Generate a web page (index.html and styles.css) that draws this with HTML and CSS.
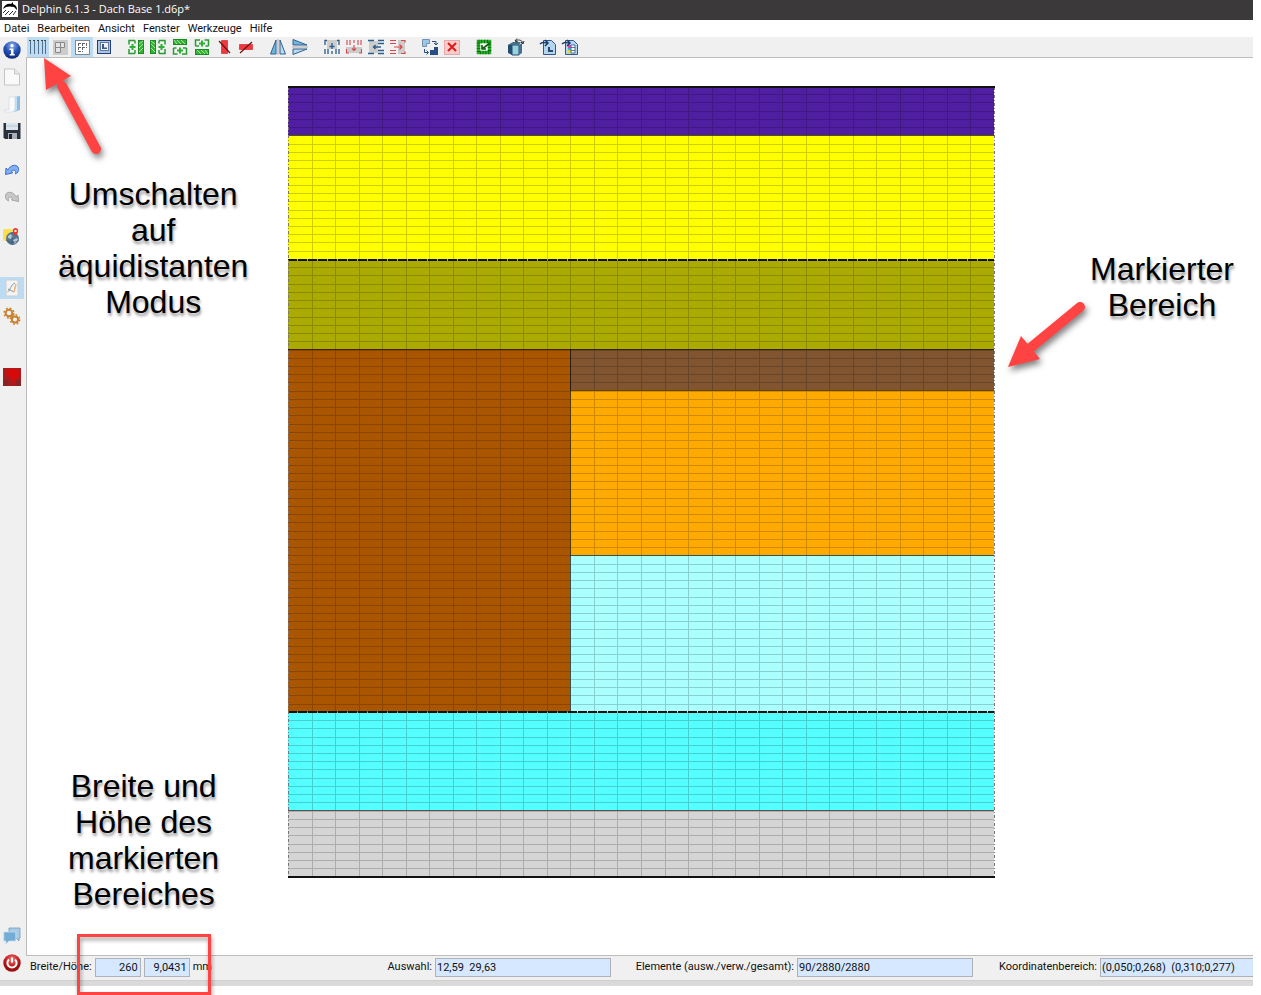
FILE: index.html
```html
<!DOCTYPE html>
<html lang="de">
<head>
<meta charset="utf-8">
<title>Delphin 6.1.3 - Dach Base 1.d6p*</title>
<link rel="stylesheet" href="styles.css">
</head>
<body>
<div class="app">
  <header class="titlebar">
    <svg class="logo" viewBox="0 0 16 16"><rect width="16" height="16" fill="#fff"/><path d="M1 8C2 4 6 2 9 3l2-2v2c3 1 4 3 4 6l-3-3C8 5 4 5 1 8z" fill="#000"/><path d="M3 14l4-4M7 14l4-4M11 14l3-4M1 12l3-3" stroke="#333" stroke-width="1"/></svg>
    <span>Delphin 6.1.3 - Dach Base 1.d6p*</span>
  </header>
  <nav class="menubar">
    <button>Datei</button><button>Bearbeiten</button><button>Ansicht</button><button>Fenster</button><button>Werkzeuge</button><button>Hilfe</button>
  </nav>
  <div class="workspace">
    <aside class="sidebar">
      <button aria-label="Info"><svg viewBox="0 0 18 18"><defs><radialGradient id="ib" cx=".5" cy=".25" r=".8"><stop offset="0" stop-color="#8fb4ee"/><stop offset=".5" stop-color="#2450b4"/><stop offset="1" stop-color="#0a2470"/></radialGradient></defs><circle cx="9" cy="9" r="8.7" fill="url(#ib)"/><circle cx="9" cy="4.7" r="1.6" fill="#fff"/><path d="M6.5 7.5h4v5.5h1.200v1.500h-5v-1.500h1.300V9H6.500z" fill="#fff"/></svg></button>
      <button aria-label="Neu"><svg viewBox="0 0 18 18"><path d="M1.500 1h10l5 5v11h-15z" fill="#fafafa" stroke="#c4c4c4"/><path d="M11.500 1v5h5" fill="#e8e8e8" stroke="#c4c4c4"/></svg></button>
      <button aria-label="Öffnen"><svg viewBox="0 0 18 18"><path d="M11 2l6-1v14l-6 2z" fill="#8dbce4"/><path d="M11 2l3-1v14l-3 2z" fill="#c4e0f4"/><path d="M6 2h6v12l-3 3H2l-1-2h5z" fill="#fafbfc" stroke="#ccd3da" stroke-width=".6"/></svg></button>
      <button aria-label="Speichern"><svg viewBox="0 0 18 18"><path d="M.5 1h17v16H2L.5 15.500z" fill="#2a313c"/><path d="M3 1h12v7H3z" fill="#dce5ec"/><path d="M3 4h12" stroke="#b8c6d0"/><path d="M5 11h9v6H5z" fill="#a8aeb5"/><path d="M6 12h3v5H6z" fill="#20252c"/></svg></button>
      <button class="gap-s" aria-label="Rückgängig"><svg viewBox="0 0 18 18"><path d="M5 9C7 4 13 3 15 6c1.500 3 0 6-2.500 7 1-3-1-5-4-3l1 2-7 1.500L3 7z" fill="#7eb0f4" stroke="#3563c8" stroke-width=".9"/></svg></button>
      <button aria-label="Wiederholen"><svg viewBox="0 0 18 18"><path d="M13 9C11 4 5 3 3 6c-1.500 3 0 6 2.500 7-1-3 1-5 4-3l-1 2 7 1.500L15 7z" fill="#c8c8c8" stroke="#a0a0a0" stroke-width=".9"/></svg></button>
      <button class="gap-m" aria-label="Klima"><svg viewBox="0 0 18 18"><rect y="1" width="10" height="12" rx="2" fill="#fbe04d"/><circle cx="9.500" cy="10.500" r="6.500" fill="#587590"/><path d="M5 8l3-2 2 2-2 3-3-1zM10 12l4-2 1 2-3 4z" fill="#b5c8d4"/><path d="M3 12c4 3 9 3 13 0M9 4v13" stroke="#304b68" stroke-width=".5" fill="none"/><path d="M12.500 8C8 3 10 0 12.500 0S17 3 12.500 8z" fill="#ee3424"/><circle cx="12.500" cy="3" r="1.200" fill="#fff"/></svg></button>
      <button class="gap-l" aria-label="Konstruktion" aria-pressed="true"><svg viewBox="0 0 18 18"><rect x="3" y="1" width="12" height="16" fill="#f4f4f4" stroke="#ccc"/><path d="M4.500 13C8 11 7 6 12 4M5 10l6 3" stroke="#8a949c" fill="none"/><path d="M13 5l-2 8" stroke="#e8b67c" stroke-width="1.500"/></svg></button>
      <button aria-label="Einstellungen"><svg viewBox="0 0 18 18" fill="none" stroke="#c98232"><circle cx="6" cy="6" r="3.300" stroke-width="2"/><circle cx="6" cy="6" r="4.900" stroke-width="1.500" stroke-dasharray="1.900 1.950"/><circle cx="12" cy="12.500" r="3.100" stroke-width="2"/><circle cx="12" cy="12.500" r="4.700" stroke-width="1.500" stroke-dasharray="1.800 1.890"/></svg></button>
      <button class="gap-xl" aria-label="Ergebnisse"><svg viewBox="0 0 18 18"><rect width="18" height="18" fill="#a81c1c"/><path d="M5 1h8l4 3-1 5-4 2-1 5-3-6-5-4z" fill="#d60a0a"/><path d="M0 12h6v6H0zM13 12h5v6h-5z" fill="#8b2222"/></svg></button>
      <button class="push" aria-label="Meldungen"><svg viewBox="0 0 18 18"><path d="M6 1h11v10h-1v3l-3-3H6z" fill="#a8cce6" stroke="#7299b8" stroke-width=".8"/><path d="M.8 5h12v9H6l-3 3v-3H.800z" fill="#73acd4" stroke="#c5deef" stroke-width=".8"/></svg></button>
      <button aria-label="Beenden"><svg viewBox="0 0 18 18"><defs><radialGradient id="rb" cy=".3"><stop offset="0" stop-color="#f08484"/><stop offset=".7" stop-color="#cc2020"/><stop offset="1" stop-color="#a01010"/></radialGradient></defs><circle cx="9" cy="9" r="8.700" fill="url(#rb)"/><path d="M6 5.500a4.600 4.600 0 1 0 6 0M9 3.500v5" fill="none" stroke="#fff" stroke-width="2"/></svg></button>
    </aside>
    <main class="content">
      <div class="toolbar">
        <div class="tools">
          <button aria-label="Äquidistant" aria-pressed="true"><svg viewBox="0 0 18 18"><path d="M1.500 3v13M5.500 3v13M9.500 3v13M13.500 3v13M16.500 3v13" stroke="#52708c"/><path d="M0 2.500h2M4 2.500h2M8 2.500h2M12 2.500h2M15 2.500h2" stroke="#444"/></svg></button>
          <button aria-label="Zoom"><svg viewBox="0 0 18 18"><rect x="2" y="2" width="15" height="15" fill="#ccc"/><path d="M4.500 4.500h9v5h-4v5h-5zM9.500 4.500v5h-5" fill="#e4e4e4" stroke="#888"/></svg></button>
          <button aria-label="Raster" aria-pressed="true"><svg viewBox="0 0 18 18"><rect x="2.500" y="2.500" width="14" height="14" fill="#fff" stroke="#888"/><path d="M5 5.500h9M5 9.500h9M5 13.500h5M5.500 5v9M9.500 5v9M13.500 5v5" stroke="#666" stroke-dasharray="3 1"/></svg></button>
          <button aria-label="Ansicht"><svg viewBox="0 0 18 18"><rect x="2.500" y="2.500" width="13" height="13" fill="#a9c6e7" stroke="#243f78"/><rect x="5.500" y="4.500" width="8" height="8" fill="#eef4fb" stroke="#6279a0"/><path d="M7 6v5h5V9.500H9V6z" fill="#40598c"/></svg></button>
        </div>
        <div class="tools">
          <button aria-label="Spalte links einfügen"><svg viewBox="0 0 18 18"><use href="#addcol"/></svg></button>
          <button aria-label="Spalte rechts einfügen"><svg viewBox="0 0 18 18"><use href="#addcol" transform="matrix(-1 0 0 1 18 0)"/></svg></button>
          <button aria-label="Zeile unten einfügen"><svg viewBox="0 0 18 18"><use href="#addcol" transform="matrix(0 -1 1 0 0 18)"/></svg></button>
          <button aria-label="Zeile oben einfügen"><svg viewBox="0 0 18 18"><use href="#addcol" transform="rotate(90 9 9)"/></svg></button>
          <button aria-label="Spalte löschen"><svg viewBox="0 0 18 18"><path d="M6.500 2.500h6v13h-6z" fill="#ee3840" stroke="#e04850"/><path d="M4 3l11 12" stroke="#6c1010" stroke-width="1.200"/></svg></button>
          <button aria-label="Zeile löschen"><svg viewBox="0 0 18 18"><path d="M2.500 6.500h13v5h-13z" fill="#ee3840" stroke="#e04850"/><path d="M3 15L15 4" stroke="#6c1010" stroke-width="1.200"/></svg></button>
        </div>
        <div class="tools">
          <button aria-label="Horizontal spiegeln"><svg viewBox="0 0 18 18"><use href="#mirror"/></svg></button>
          <button aria-label="Vertikal spiegeln"><svg viewBox="0 0 18 18"><use href="#mirror" transform="rotate(90 9 9)"/></svg></button>
        </div>
        <div class="tools">
          <button class="blue" aria-label="Spalten teilen"><svg viewBox="0 0 18 18"><path d="M4 2h10v9H4z" fill="#ccc"/><path d="M2 7V2.500h2M16 7V2.500h-2M9 5v6M6.500 8.500h5M2 11v5M5 11v5M9 13v3M13 11v5M16 11v5" fill="none" stroke="currentColor" stroke-width="1.300"/></svg></button>
          <button class="red" aria-label="Spalten verbinden"><svg viewBox="0 0 18 18"><path d="M1 9h16v6H1z" fill="#ccc"/><path d="M2 2v5M5 2v5M9 2v3M13 2v5M16 2v5M9 7v6M7 10.500l2 2 2-2M1.500 11v4H4M16.500 11v4H14" fill="none" stroke="currentColor" stroke-width="1.100"/></svg></button>
          <button class="blue" aria-label="Zeilen teilen"><svg viewBox="0 0 18 18"><path d="M2 3h9v12H2z" fill="#ccc"/><path d="M1 2.500h6M1 15.500h6M11 2.500h6M11 5.500h6M11 12.500h6M11 15.500h6M14 9H6M8.500 7l-2 2 2 2" fill="none" stroke="currentColor" stroke-width="1.300"/></svg></button>
          <button class="red" aria-label="Zeilen verbinden"><svg viewBox="0 0 18 18"><path d="M9 2h7v14H9z" fill="#ccc"/><path d="M1 2.500h6M1 5.500h6M1 12.500h6M1 15.500h6M5 9h8M10.500 6.500L13 9l-2.500 2.500M12 2.500h4v2M12 15.500h4v-2" fill="none" stroke="currentColor" stroke-width="1.200"/></svg></button>
        </div>
        <div class="tools">
          <button aria-label="Zuweisen"><svg viewBox="0 0 18 18"><path d="M1.500 1.500h7v4h-3v3h-4z" fill="#9ac9e8" stroke="#7591b0"/><path d="M9 12h8v5H9zM13 9h4v3h-4z" fill="#294d80"/><path d="M11 3.500h4V6M13 5l2 2 2-2M3.500 11v3.500H7M5.500 12.500l2 2-2 2" fill="none" stroke="#294d80"/></svg></button>
          <button aria-label="Zuweisung löschen"><svg viewBox="0 0 18 18"><rect x="1.500" y="2.500" width="15" height="14" fill="#fbcaca" stroke="#e6aaaa"/><path d="M5 5l8 8M13 5l-8 8" stroke="#df1818" stroke-width="2"/></svg></button>
        </div>
        <div class="tools"><button aria-label="Bearbeiten"><svg viewBox="0 0 18 18"><rect x="3.500" y="3.500" width="11" height="11" fill="#fff" stroke="#24b024" stroke-width="3.500"/><rect x="3.500" y="3.500" width="11" height="11" fill="none" stroke="#0c6010" stroke-width="3.500" stroke-dasharray=".8 2"/><path d="M7 7v4h4M7 11l8-6" fill="none" stroke="#145c18" stroke-width="1.600"/></svg></button></div>
        <div class="tools"><button aria-label="Drehen"><svg viewBox="0 0 18 18"><path d="M1 7l4-2v12l-4-2z" fill="#254d70"/><path d="M5 7h7v10H5z" fill="#9bd0df" stroke="#254d70"/><path d="M12 7l3-2v10l-3 2zM1 7l5-3h8l-2 3z" fill="#42718b"/><path d="M8 3c3-2 7-1 8 2M14 4l2 2 1-3M10 .5L8 3l3 1" fill="none" stroke="#333"/></svg></button></div>
        <div class="tools">
          <button aria-label="Import"><svg viewBox="0 0 18 18"><path d="M4.500 2.500h8l4 4v10h-12z" fill="#b4d7f0" stroke="#31568c"/><path d="M9 9v5h5v-2h-3V9z" fill="#31466c"/><path d="M1 6c3-3 4-1 7-1M6 2l3 3-3 3" fill="none" stroke="#203a68" stroke-width="1.500"/></svg></button>
          <button aria-label="Tabelle importieren"><svg viewBox="0 0 18 18"><path d="M4.500 2.500h8l4 4v10h-12z" fill="#b4d7f0" stroke="#31568c"/><path d="M10 7h4v8h-4z" fill="#fff"/><path d="M7 7h3v3H7z" fill="#e73fac"/><path d="M7 10h3v2H7z" fill="#35b8d8"/><path d="M7 12h3v3H7z" fill="#e9d71e"/><path d="M10 7h4v8h-4zM10 9.500h4M10 12.500h4" fill="none" stroke="#31568c" stroke-width=".8"/><path d="M1 6c3-3 4-1 7-1M6 2l3 3-3 3" fill="none" stroke="#203a68" stroke-width="1.500"/></svg></button>
        </div>
      </div>
      <div class="canvas">
        <svg class="construction" viewBox="0 0 708 792">
          <g id="layers"></g>
          <path id="grid" class="grid"/>
          <path class="edge" d="M0 49.500h706M0 263.500h706M282.500 304.500h424M282.500 469.500h424M0 724.500h706M282.500 263v362"/>
          <path class="contact" d="M0 174h706M0 626h706"/>
          <path class="side" d="M.5 1v789M706.500 1v789"/>
          <path class="outer" d="M0 1h707M0 791h707"/>
        </svg>
      </div>
      <footer class="statusbar">
        <label for="w">Breite/Höhe:</label>
        <input class="num" id="w" value="260">
        <input class="num" id="h" aria-label="Höhe" value="9,0431">
        <span class="unit">mm</span>
        <label class="first" for="sel">Auswahl:</label>
        <input class="wide" id="sel" value="12,59  29,63">
        <label class="elements" for="el">Elemente (ausw./verw./gesamt):</label>
        <input class="wide" id="el" value="90/2880/2880">
        <label class="coords" for="co">Koordinatenbereich:</label>
        <input class="last" id="co" value="(0,050;0,268)  (0,310;0,277)">
      </footer>
    </main>
  </div>
  <div class="bottom-edge"></div>

  <p class="note note-mode">Umschalten<br>auf<br>äquidistanten<br>Modus</p>
  <p class="note note-size">Breite und<br>Höhe des<br>markierten<br>Bereiches</p>
  <p class="note note-area">Markierter<br>Bereich</p>
  <svg class="arrow arrow-mode" viewBox="0 0 70 110"><path d="M18 28l34 63" stroke-width="10" stroke-linecap="round"/><path d="M0 0l27 18-25 14z"/></svg>
  <svg class="arrow arrow-area" viewBox="0 0 90 75"><path d="M21 47l51-42" stroke-width="10" stroke-linecap="round"/><path d="M0 65l13-31 19 23z"/></svg>
  <div class="frame"></div>
</div>
<svg class="defs">
  <defs>
    <g id="addcol"><rect x="11.500" y="2.500" width="5" height="13" fill="#35b135" stroke="#1b8a22"/><path d="M12 6l4-3M12 10l4-4M12 14l4-4" stroke="#a4e8a0"/><path d="M8 2.500H2v4M2 11v4.500h6M8 2.500v3M8 12v3.500" fill="none" stroke="#2b9a35" stroke-width="1.500"/><path d="M5.500 6v6M2.500 9h6" stroke="#2fae38" stroke-width="2"/></g>
    <g id="mirror"><path d="M7 2v14H1.500z" fill="#6fb7dd" stroke="#315f94"/><path d="M11 2v14h5.500z" fill="#b9dced" stroke="#315f94"/><path d="M9 1v16" stroke="#aaa"/></g>
  </defs>
</svg>
<script src="construction.js"></script>
</body>
</html>
```
FILE: styles.css
```css
* { box-sizing: border-box; }
body { min-height: 100vh; margin: 0; background: #fff; color: #111; font: 11px/16px Roboto, "Noto Sans", sans-serif; }
button { border: 0; padding: 0; background: none; font: inherit; color: inherit; }
svg { display: block; }
.defs { position: absolute; width: 0; height: 0; }
.app { position: relative; display: flex; flex-direction: column; min-height: calc(100vh - 9px); margin-right: 8px; }
.titlebar { display: flex; align-items: center; gap: 4px; height: 20px; padding: 0 2px 3px; background: #3b3939; color: #fff; font-family: "Open Sans", "Noto Sans", sans-serif; }
.logo { width: 16px; height: 16px; }
.menubar { display: flex; gap: 8px; height: 17px; padding: 1px 4px 0; }
.workspace { display: flex; flex: 1; background: #f0f0f0; }
.sidebar { display: flex; flex-direction: column; width: 26px; padding-bottom: 4px; }
.sidebar button { display: grid; place-items: center; width: 24px; height: 27px; }
.sidebar button:first-child { height: 26px; }
.sidebar svg { width: 18px; height: 18px; }
.sidebar [aria-pressed="true"] { height: 22px; margin-bottom: 3px; background: #bcdcf4; }
.sidebar .gap-s { margin-top: 12px; }
.sidebar .gap-m { margin-top: 13px; }
.sidebar .gap-l { margin-top: 27px; }
.sidebar .gap-xl { margin-top: 34px; }
.sidebar .push { margin-top: auto; }
.content { display: flex; flex: 1; flex-direction: column; min-width: 0; }
.toolbar { display: flex; gap: 10px; height: 20px; padding-left: 1px; }
.tools { display: flex; }
.tools button { display: grid; place-items: center; width: 22px; height: 20px; }
.tools svg { width: 18px; height: 18px; }
.tools [aria-pressed="true"] { background: #bcdcf4; }
.blue { color: #2c5b8c; }
.red { color: #d8474c; }
.canvas { display: flex; flex: 1; justify-content: center; align-items: flex-start; padding-top: 28px; border: solid #bdbdbd; border-width: 1px 0 1px 1px; background: #fff; }
.construction { width: 708px; height: 792px; margin-left: 3px; }
.grid { fill: none; stroke: #000; stroke-opacity: .19; shape-rendering: crispEdges; }
.edge { fill: none; stroke: #000; stroke-opacity: .6; }
.contact { fill: none; stroke: #111; stroke-width: 2; stroke-dasharray: 9 1; }
.side { fill: none; stroke: #777; stroke-dasharray: 3 2 1 2; }
.outer { fill: none; stroke: #111; stroke-width: 2; }
.statusbar { display: flex; align-items: center; height: 24px; padding: 0 0 2px 4px; white-space: nowrap; }
.statusbar label { margin-right: 3px; }
.statusbar input { height: 19px; padding: 0 1px; border: 1px solid #adb2b8; border-radius: 0; background: #d6e8ff; color: #111; font: inherit; white-space: pre; }
.statusbar .num { width: 46px; margin-right: 3px; padding-right: 2px; text-align: right; }
.statusbar .wide { width: 176px; }
.statusbar .last { width: 153px; border-right: 0; }
.statusbar .first { margin-left: auto; }
.statusbar .elements { min-width: 183px; text-align: right; }
.statusbar .coords { min-width: 124px; text-align: right; }
.bottom-edge { height: 6px; border-top: 1px solid #cfcfcf; background: #dadada; }
.note { position: absolute; margin: 0; color: #000; font: 32px/36px "Liberation Sans", Arial, sans-serif; text-align: center; white-space: nowrap; text-shadow: 1px 3px 3px rgba(0, 0, 0, .4); }
.note-mode { top: 176px; left: 58px; }
.note-size { top: 768px; left: 68px; }
.note-area { top: 251px; right: 19px; }
.arrow { position: absolute; overflow: visible; fill: #ff4343; stroke: #ff4343; stroke-width: 0; filter: drop-shadow(2px 4px 3px rgba(0, 0, 0, .5)); }
.arrow-mode { top: 58px; left: 44px; width: 70px; height: 110px; }
.arrow-area { top: 302px; left: 1008px; width: 90px; height: 75px; }
.frame { position: absolute; left: 77px; bottom: -9px; width: 134px; height: 61px; border: 3px solid #ff4343; filter: drop-shadow(1px 3px 2px rgba(0, 0, 0, .4)); }
```
FILE: construction.js
```js
// Material layers: x, y, width, height, colour
const layers = [
  [0, 1, 706, 48, '#501ea0'],
  [0, 49, 706, 125, '#ffff00'],
  [0, 174, 706, 89, '#aaaa00'],
  [0, 263, 282, 363, '#aa5500'],
  [282, 263, 424, 41, '#805530'],
  [282, 304, 424, 165, '#ffaa00'],
  [282, 469, 424, 157, '#aaffff'],
  [0, 626, 706, 98, '#55ffff'],
  [0, 724, 706, 67, '#d5d5d5']
];
const group = document.getElementById('layers');
for (const [x, y, width, height, fill] of layers) {
  const rect = document.createElementNS('http://www.w3.org/2000/svg', 'rect');
  for (const [key, value] of Object.entries({ x, y, width, height, fill })) rect.setAttribute(key, value);
  group.appendChild(rect);
}
// Equidistant mesh: 30 columns and 96 rows
let d = '';
for (let i = 1; i < 30; i++) d += `M${Math.round(i * 706 / 30) + 0.5} 1v790`;
for (let j = 1; j < 96; j++) d += `M0 ${Math.round(j * 790.5 / 96) + 0.5}h706`;
document.getElementById('grid').setAttribute('d', d);
```
